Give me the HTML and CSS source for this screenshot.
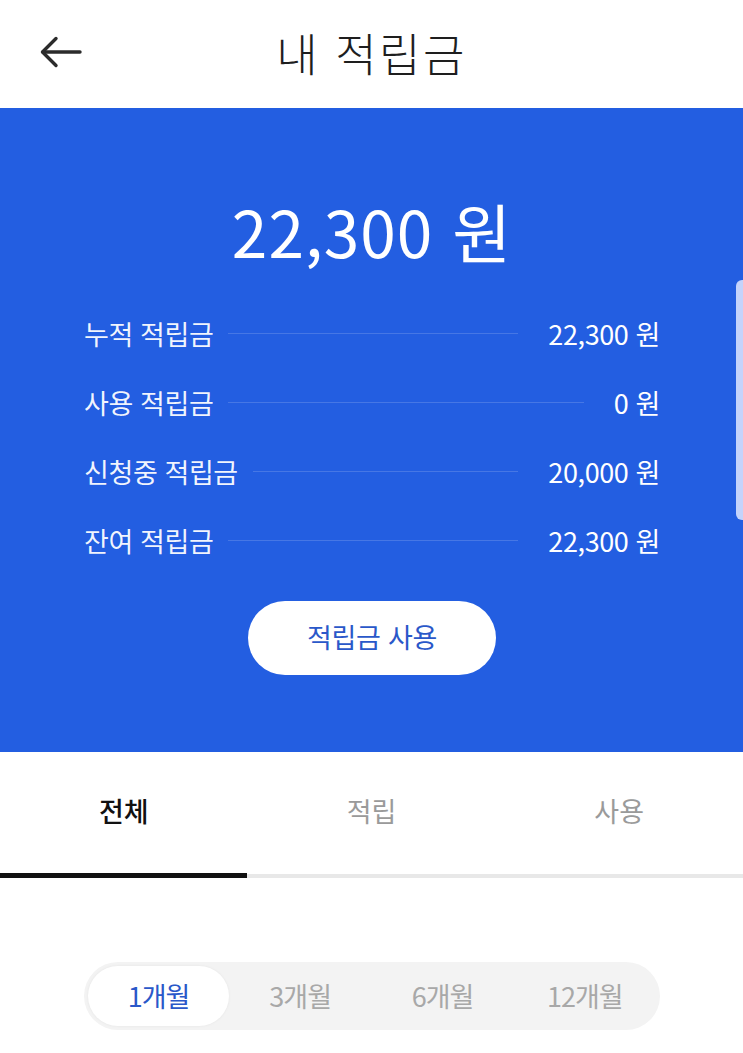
FILE: index.html
```html
<!DOCTYPE html>
<html lang="ko">
<head>
<meta charset="utf-8">
<title>내 적립금</title>
<link rel="stylesheet" href="styles.css">
</head>
<body>
<div class="page">
  <header class="topbar">
    <div class="back">
      <svg width="42" height="32" viewBox="0 0 42 32" fill="none" stroke="#2b2b2b" stroke-width="3.4" stroke-linecap="round" stroke-linejoin="round">
        <path d="M40 16H3"/>
        <path d="M16 2.5L2.5 16L16 29.5"/>
      </svg>
    </div>
    <h1 class="title">내 적립금</h1>
    <div></div>
  </header>

  <section class="summary">
    <div class="amount">22,300 원</div>
    <ul class="rows">
      <li class="row"><span class="label">누적 적립금</span><span class="rule"></span><span class="value">22,300 원</span></li>
      <li class="row"><span class="label">사용 적립금</span><span class="rule"></span><span class="value">0 원</span></li>
      <li class="row"><span class="label">신청중 적립금</span><span class="rule"></span><span class="value">20,000 원</span></li>
      <li class="row"><span class="label">잔여 적립금</span><span class="rule"></span><span class="value">22,300 원</span></li>
    </ul>
    <button class="use-btn">적립금 사용</button>
    <div class="scrollbar"></div>
  </section>

  <nav class="tabs">
    <div class="tab active">전체</div>
    <div class="tab">적립</div>
    <div class="tab">사용</div>
  </nav>
  <div class="tab-track"><div class="tab-ink"></div></div>

  <div class="periods">
    <div class="period selected">1개월</div>
    <div class="period">3개월</div>
    <div class="period">6개월</div>
    <div class="period">12개월</div>
  </div>
</div>
</body>
</html>
```

FILE: styles.css
```css
html, body {
  margin: 0;
  padding: 0;
  background: #ffffff;
}
body {
  font-family: "Noto Sans CJK KR", "Noto Sans", sans-serif;
  width: 743px;
  overflow: hidden;
}
.page {
  position: relative;
  width: 743px;
}
.topbar {
  height: 108px;
  display: grid;
  grid-template-columns: 1fr auto 1fr;
  align-items: center;
  background: #fff;
}
.back {
  padding-left: 40px;
  display: flex;
  align-items: center;
  padding-bottom: 4px;
}
.title {
  margin: 0;
  font-size: 45px;
  font-weight: 300;
  color: #1e1e1e;
  letter-spacing: 2.5px;
  line-height: 1;
  padding-bottom: 4px;
}
.summary {
  position: relative;
  background: #235ee1;
  height: 644px;
  box-sizing: border-box;
  padding: 82px 83px 0 84px;
  display: flex;
  flex-direction: column;
  align-items: center;
}
.amount {
  color: #fff;
  font-size: 64px;
  line-height: 80px;
  font-weight: 400;
  letter-spacing: 1px;
}
.rows {
  list-style: none;
  margin: 29px 0 0;
  padding: 0;
  width: 100%;
}
.row {
  height: 69px;
  display: flex;
  align-items: center;
  color: #fff;
  font-size: 27px;
}
.label {
  color: rgba(255,255,255,0.95);
  letter-spacing: -0.4px;
  white-space: nowrap;
}
.rule {
  flex: 1;
  height: 1px;
  background: rgba(255,255,255,0.16);
  margin: 0 30px 0 15px;
}
.value {
  white-space: nowrap;
  letter-spacing: -0.4px;
  font-size: 27px;
}
.use-btn {
  margin-top: 26px;
  width: 248px;
  height: 74px;
  border: none;
  border-radius: 37px;
  background: #fff;
  color: #2a58c9;
  font-family: "Noto Sans CJK KR", "Noto Sans", sans-serif;
  font-size: 27px;
  font-weight: 400;
  letter-spacing: -0.3px;
  padding: 0 0 4px;
}
.scrollbar {
  position: absolute;
  right: 0;
  top: 172px;
  width: 7px;
  height: 240px;
  background: rgba(225,232,255,0.85);
  border-radius: 6px 0 0 6px;
}
.tabs {
  display: flex;
  height: 121px;
}
.tab {
  flex: 1;
  display: flex;
  align-items: center;
  justify-content: center;
  font-size: 27px;
  color: #9a9a9a;
  padding-bottom: 4px;
  box-sizing: border-box;
}
.tab.active {
  color: #111;
  font-weight: 500;
}
.tab-track {
  height: 5px;
  display: flex;
  align-items: flex-end;
  background: linear-gradient(to bottom, transparent 1px, #e8e8e8 1px);
}
.tab-ink {
  width: 247px;
  height: 5px;
  background: #111;
}
.periods {
  margin: 84px 83px 0 84px;
  height: 68px;
  border-radius: 34px;
  background: #f3f3f3;
  padding: 4px;
  box-sizing: border-box;
  display: flex;
}
.period {
  flex: 1;
  display: flex;
  align-items: center;
  justify-content: center;
  font-size: 27px;
  color: #a8a8a8;
  letter-spacing: -1px;
  border-radius: 30px;
  padding-bottom: 2px;
}
.period.selected {
  background: #fff;
  color: #2a58c9;
  box-shadow: 0 0 3px rgba(0,0,0,0.06);
  flex: 0 0 141px;
}
```
